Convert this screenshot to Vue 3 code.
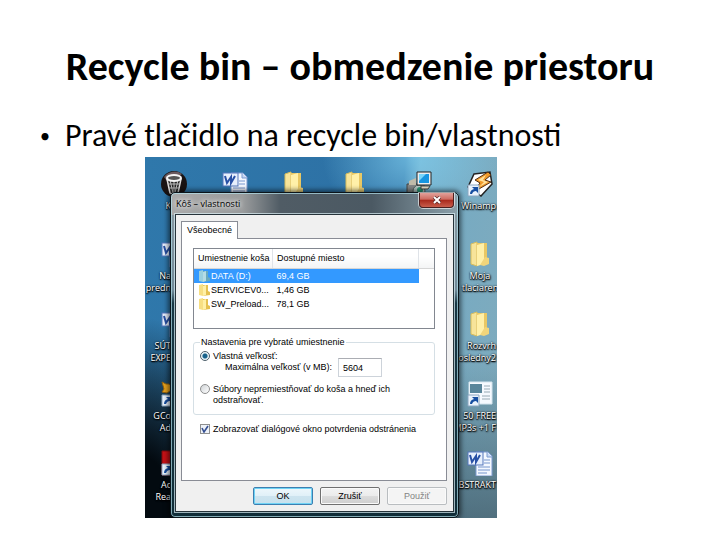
<template>
  <main class="slide">
    <h1>Recycle bin – obmedzenie priestoru</h1>
    <ul class="points">
      <li>Pravé tlačidlo na recycle bin/vlastnosti</li>
    </ul>

    <section class="desktop">
      <div
        v-for="(item, i) in items"
        :key="i"
        class="shortcut"
        :class="item.align"
        :style="{ left: item.x + 'px', top: item.y + 'px' }"
      >
        <svg class="icon" viewBox="0 0 26 26">
          <g v-if="item.icon === 'bin'">
            <circle cx="13" cy="13" r="13" fill="#191313" />
            <path d="M3 6a13 13 0 0 1 18-3L8 13z" fill="#6b5b60" />
            <path d="M6 8l3 14q4 3 8 0l3-14z" fill="#262626" stroke="#ddd" stroke-width="1.5" />
            <path d="M9 9l3 13M13 9v14M17 9l-3 13M7 13h12M8 17h10" stroke="#bbb" fill="none" />
            <ellipse cx="13" cy="7" rx="7" ry="3" fill="#555" stroke="#f5f5f5" stroke-width="2" />
          </g>
          <g v-else-if="item.icon === 'word'">
            <path d="M9 2h12l4 4v20H9z" fill="#f4f8ff" stroke="#7d9bd0" />
            <path d="M20 2v5h5" fill="#c5d6f1" stroke="#7d9bd0" />
            <path d="M17 10h6M17 13h6M11 17h12M11 20h12M11 23h9" stroke="#7796cd" fill="none" />
            <rect x="1" y="2" width="15" height="13" fill="#e7effc" stroke="#5576bb" />
            <path d="M3 5l2 7 4-6 0 6 4-7" fill="none" stroke="#2850a5" stroke-width="2" />
          </g>
          <g v-else-if="item.icon === 'folder'">
            <path d="M4 3l6-2v24l-6-2z" fill="#f7e49a" stroke="#d8bd5d" />
            <path d="M10 2h10v18l-10 5z" fill="#e9c864" />
            <path d="M10 4l7-2v21l-7 2z" fill="#fff0a9" />
            <path d="M18 16l4 1v6l-5 2-4-1z" fill="#f1d57b" />
          </g>
          <g v-else-if="item.icon === 'computer'">
            <path d="M1 13h17v13H1z" fill="#858787" stroke="#444" />
            <path d="M3 10l7-3v7H3z" fill="#c0bba9" />
            <circle cx="13" cy="20" r="6" fill="#b7c9c6" stroke="#50605d" />
            <circle cx="14" cy="19" r="3" fill="#2a9b78" />
            <path d="M11 1h14v13H11z" fill="#eee" stroke="#222" />
            <path d="M13 3h10v9H13z" fill="#1795e0" />
            <path d="M13 3h7l-7 7z" fill="#79d5fa" />
            <path d="M15 15h9l-2 3h-7z" fill="#e8e2cb" stroke="#444" />
          </g>
          <g v-else-if="item.icon === 'winamp'">
            <path d="M7 3l16-2 2 12-11 12-13-9z" fill="#fff" stroke="#222" stroke-width="1.5" />
            <path d="M21 1L8 9l5 3-8 10 19-11-6-2 6-5z" fill="#f09a2a" stroke="#533016" />
            <path d="M19 4l-8 5 6 2-5 5 9-5-5-2z" fill="#ffe19b" />
          </g>
          <g v-else-if="item.icon === 'page'">
            <path d="M2 1h23v22H2z" fill="#f6faff" stroke="#d5e5ee" />
            <path d="M3 3h12v9H3z" fill="#59869b" />
            <path d="M17 5h6M17 8h6M17 11h6M15 15h8M15 18h8" stroke="#98aab4" fill="none" />
          </g>
          <g v-else-if="item.icon === 'key'">
            <path d="M1 1l4 2h3l3 3h14v4H9l-3 2-5-1 2-3z" fill="#e9a31c" stroke="#93610c" />
            <path d="M12 10h4v8h-4z" fill="#d18d18" />
          </g>
          <path v-else d="M1 1h24v24H1z" fill="#c51116" stroke="#820a0d" />
          <g v-if="item.link">
            <path d="M1 14h11v11H1z" fill="#eaf3fc" stroke="#8ba6c0" />
            <path d="M3 23q0-4 4-5l-2-2h6v6l-2-2q-3 0-4 3z" fill="#174fa1" />
          </g>
        </svg>
        <span v-for="line in item.label" :key="line" class="caption">{{ line }}</span>
      </div>

      <form class="dialog" @submit.prevent>
        <header class="titlebar">
          <span class="title">Kôš – vlastnosti</span>
          <button type="button" class="close" aria-label="Zavrieť">
            <svg viewBox="0 0 10 8">
              <path d="M2 1l6 6M8 1L2 7" stroke="#5b2929" stroke-width="3.4" />
              <path d="M2 1l6 6M8 1L2 7" stroke="#fff" stroke-width="2" />
            </svg>
          </button>
        </header>

        <div class="client">
          <button type="button" class="tab">Všeobecné</button>
          <div class="panel">
            <div class="list">
              <table>
                <thead>
                  <tr>
                    <th class="place">Umiestnenie koša</th>
                    <th>Dostupné miesto</th>
                    <th class="rest"></th>
                  </tr>
                </thead>
                <tbody>
                  <tr v-for="drive in drives" :key="drive.name" :class="{ selected: drive.selected }">
                    <td>
                      <span class="drive">
                        <svg viewBox="0 0 12 12">
                          <path d="M1 1l4-1v12l-4-1z" :fill="drive.selected ? '#9bd0df' : '#f7df83'" />
                          <path d="M5 1h5v6l2 1v3l-7 1z" :fill="drive.selected ? '#69a9bd' : '#e5c04f'" />
                          <path d="M5 2l3-1v10l-3 1z" :fill="drive.selected ? '#b5dce5' : '#fff0a6'" />
                        </svg>
                        <span>{{ drive.name }}</span>
                      </span>
                    </td>
                    <td>{{ drive.space }}</td>
                    <td class="rest"></td>
                  </tr>
                </tbody>
              </table>
            </div>

            <fieldset>
              <legend>Nastavenia pre vybraté umiestnenie</legend>
              <div class="option">
                <input id="custom" v-model="mode" type="radio" name="mode" value="custom" />
                <label for="custom">Vlastná veľkosť:</label>
              </div>
              <div class="size">
                <label for="max">Maximálna veľkosť (v MB):</label>
                <input id="max" v-model="maxSize" type="text" />
              </div>
              <div class="option">
                <input id="direct" v-model="mode" type="radio" name="mode" value="direct" />
                <label for="direct">Súbory nepremiestňovať do koša a hneď ich odstraňovať.</label>
              </div>
            </fieldset>

            <div class="option confirm">
              <input id="confirm" v-model="confirmDelete" type="checkbox" />
              <label for="confirm">Zobrazovať dialógové okno potvrdenia odstránenia</label>
            </div>
          </div>

          <footer class="actions">
            <button type="submit" class="default">OK</button>
            <button type="button">Zrušiť</button>
            <button type="button" disabled>Použiť</button>
          </footer>
        </div>
      </form>
    </section>
  </main>
</template>

<script setup>
import { ref } from 'vue'

const mode = ref('custom')
const maxSize = ref('5604')
const confirmDelete = ref(true)

const drives = [
  { name: 'DATA (D:)', space: '69,4 GB', selected: true },
  { name: 'SERVICEV0...', space: '1,46 GB' },
  { name: 'SW_Preload...', space: '78,1 GB' },
]

// x and y are the top left corner of each 72px wide shortcut
const items = [
  { icon: 'bin', x: -7, y: 14, label: ['K'], align: 'left' },
  { icon: 'word', x: 54, y: 14 },
  { icon: 'folder', x: 113, y: 14 },
  { icon: 'folder', x: 174, y: 14 },
  { icon: 'computer', x: 238, y: 14 },
  { icon: 'winamp', x: 299, y: 14, label: ['Winamp'], align: 'right', link: true },
  { icon: 'word', x: -7, y: 84, label: ['Na', 'predn'], align: 'left' },
  { icon: 'folder', x: 299, y: 84, label: ['Moja', 'tlaciaren'] },
  { icon: 'word', x: -7, y: 154, label: ['SÚT', 'EXPE'], align: 'left' },
  { icon: 'folder', x: 299, y: 154, label: ['Rozvrh', 'posledny2'], align: 'right' },
  { icon: 'key', x: -7, y: 224, label: ['GCo', 'Ad'], align: 'left', link: true },
  { icon: 'page', x: 299, y: 224, label: ['50 FREE', 'MP3s +1 F'], align: 'right', link: true },
  { icon: 'reader', x: -7, y: 293, label: ['Ac', 'Rea'], align: 'left', link: true },
  { icon: 'word', x: 299, y: 293, label: ['ABSTRAKT'], align: 'right' },
]
</script>

<style>
body {
  margin: 0;
  background: #fff;
}
</style>

<style scoped>
.slide {
  padding: 43px 36px 22px;
  color: #000;
  font-family: Carlito, Calibri, Lato, sans-serif;
}

h1 {
  margin: 0;
  font-size: 40px;
  line-height: 48px;
  text-align: center;
}

.points {
  margin: 25px 0 0;
  padding-left: 29px;
  font-size: 32px;
  line-height: 40px;
}

.points li {
  list-style: none;
  position: relative;
}

.points li::before {
  content: '•';
  position: absolute;
  left: -25px;
  font-size: 20px;
}

.desktop {
  position: relative;
  max-width: 352px;
  height: 361px;
  margin: 1px 0 0 109px;
  overflow: hidden;
  background:
    radial-gradient(ellipse 90px 200px at 0 100%, #030a10 30%, rgba(3, 10, 16, 0) 100%),
    radial-gradient(ellipse 90px 70px at 76% 0, rgba(130, 208, 240, 0.7), rgba(130, 208, 240, 0)),
    linear-gradient(180deg, rgba(60, 80, 90, 0) 55%, rgba(50, 72, 84, 0.6) 100%),
    linear-gradient(95deg, #2f78ab 0%, #2d70a4 68%, #72aac5 72%, #7fabbd 100%);
  font-family: "Open Sans", "Noto Sans", sans-serif;
  font-size: 9px;
}

.shortcut {
  position: absolute;
  display: flex;
  flex-direction: column;
  align-items: center;
  width: 72px;
}

.icon {
  width: 26px;
  height: 26px;
  margin-bottom: 3px;
}

.caption {
  color: #fff;
  line-height: 12px;
  white-space: nowrap;
  text-shadow: 0 1px 1px #000, 1px 1px 2px #000, 0 0 2px #000;
}

.left .caption {
  align-self: flex-start;
  width: 33px;
  text-align: right;
}

/* long captions end at the desktop's edge and run under the dialog */
.right .caption {
  align-self: flex-start;
  display: flex;
  justify-content: flex-end;
  width: 52px;
}

.dialog {
  position: absolute;
  top: 35px;
  left: 25px;
  box-sizing: border-box;
  width: 289px;
  border: 1px solid #0b141a;
  border-radius: 5px;
  padding: 0 4px 5px;
  background:
    linear-gradient(90deg, #aaa 0, #9a9c9d 25%, #505c65 38%, #4b5963 70%, #8ba0aa 100%) 0 0 / 100% 22px no-repeat,
    linear-gradient(180deg, #8c9ba3 0, #718a98 30%, #183744 34%, #102d38 100%);
  box-shadow: inset 0 0 0 1px rgba(180, 225, 235, 0.7), 0 0 5px 2px rgba(0, 0, 0, 0.55);
  color: #000;
  font-family: "Liberation Sans", Arial, sans-serif;
  font-size: 9px;
  line-height: 11px;
}

button,
input {
  font: inherit;
  color: inherit;
}

.titlebar {
  display: flex;
  justify-content: space-between;
  height: 21px;
}

.title {
  padding: 5px 0 0 1px;
  font-family: "Open Sans", "Noto Sans", sans-serif;
  text-shadow: 0 0 4px #fff, 0 0 6px #fff;
}

.close {
  display: flex;
  align-items: center;
  justify-content: center;
  width: 35px;
  height: 15px;
  padding: 0;
  border: 1px solid #4a2020;
  border-top: 0;
  border-radius: 0 0 4px 4px;
  background: linear-gradient(#e2a19a 0, #cd6b60 45%, #a8281b 50%, #c95d4c 100%);
  box-shadow: 0 0 0 1px rgba(255, 255, 255, 0.6);
}

.close svg {
  width: 10px;
  height: 8px;
}

.client {
  border: 1px solid #26333a;
  outline: 1px solid rgba(220, 240, 245, 0.7);
  padding: 6px 6px 6px 5px;
  background: #f0f0f0;
}

.tab {
  position: relative;
  display: block;
  height: 18px;
  margin-bottom: -1px;
  padding: 0 5px;
  border: 1px solid #898c95;
  border-bottom: 0;
  background: #fff;
}

.panel {
  height: 222px;
  border: 1px solid #898c95;
  padding: 9px 11px 10px;
  background: #fff;
}

.list {
  height: 79px;
  border: 1px solid #828790;
}

table {
  width: 100%;
  border-collapse: collapse;
  table-layout: fixed;
}

th {
  height: 19px;
  padding: 0 4px;
  border-right: 1px solid #dfe3e8;
  border-bottom: 1px solid #d5d5d5;
  background: linear-gradient(#fff 40%, #f3f4f5);
  font-weight: normal;
  text-align: left;
  white-space: nowrap;
}

th.place {
  width: 70px;
}

th.rest {
  width: 7px;
  border-right: 0;
}

td {
  height: 14px;
  padding: 0 4px;
}

.selected td {
  background: #3399ff;
  color: #fff;
}

.selected td.rest {
  background: #fff;
}

.drive {
  display: flex;
  align-items: center;
  gap: 1px;
  white-space: nowrap;
}

.drive svg {
  flex: none;
  width: 12px;
  height: 12px;
}

fieldset {
  min-width: 0;
  margin: 8px 0 0;
  padding: 3px 7px 8px 6px;
  border: 1px solid #d5dfe5;
  border-radius: 3px;
}

legend {
  padding: 0 1px;
}

.option {
  display: flex;
  align-items: flex-start;
  gap: 3px;
}

.option input {
  appearance: none;
  flex: none;
  box-sizing: border-box;
  width: 10px;
  height: 10px;
  margin: 0;
  border: 1px solid #8e8f8f;
  background: linear-gradient(135deg, #cfd3d6, #fff);
}

.option input[type='radio'] {
  border-radius: 50%;
}

.option input[type='radio']:checked {
  border-color: #4d5f6b;
  background: radial-gradient(circle, #17618a 0 2px, #d3e7ef 3px, #fff 4px);
}

.option input[type='checkbox']:checked {
  background: #eef2f8 url("data:image/svg+xml,%3Csvg xmlns='http://www.w3.org/2000/svg' viewBox='0 0 8 8'%3E%3Cpath d='M1 3l2 4 4-6' fill='none' stroke='%23354f92' stroke-width='1.6'/%3E%3C/svg%3E");
}

.size {
  display: flex;
  align-items: center;
  justify-content: flex-end;
  gap: 6px;
  padding-right: 45px;
  margin: -4px 0 7px;
}

.size input {
  box-sizing: border-box;
  width: 44px;
  height: 19px;
  padding: 0 4px;
  border: 1px solid #cdd3da;
  border-top-color: #abadb3;
}

.confirm {
  padding: 9px 0 0 7px;
}

.actions {
  display: flex;
  justify-content: flex-end;
  gap: 7px;
  margin-top: 6px;
}

.actions button {
  width: 60px;
  height: 18px;
  padding: 0;
  border: 1px solid #707070;
  border-radius: 2px;
  background: linear-gradient(#f3f3f3 0, #ebebeb 50%, #dcdcdc 50%, #cfcfcf 100%);
  box-shadow: inset 0 0 0 1px #fafafa;
}

.actions .default {
  border-color: #3c7fb1;
  background: linear-gradient(#eef7fb 0, #e0f0f8 50%, #cde4ef 50%, #c7e1ee 100%);
  box-shadow: inset 0 0 0 1px #6fd3f5;
}

.actions button:disabled {
  border-color: #b9bdc0;
  background: #f4f4f4;
  color: #838383;
}
</style>
